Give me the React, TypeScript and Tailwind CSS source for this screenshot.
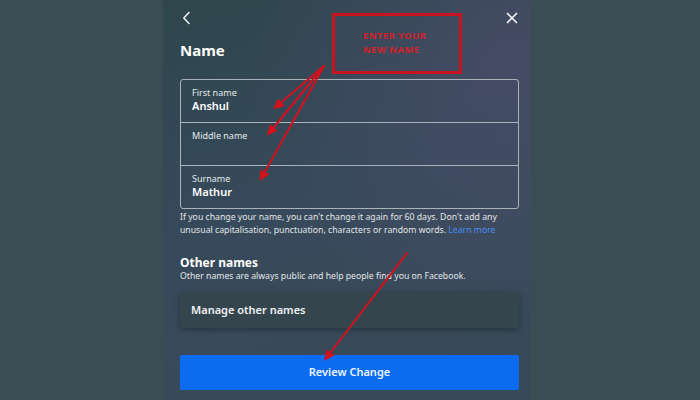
import React from "react";

const font = { fontFamily: '"Noto Sans", "Open Sans", Arial, sans-serif' };

function Field({ label, value }: { label: string; value?: string }) {
  return (
    <div className="h-[42px] px-[11px] pt-[7px] flex flex-col">
      <span className="text-[9px] leading-[12px] text-[#e4e8ea]">{label}</span>
      {value && <span className="text-[11px] leading-[13px] font-semibold text-white">{value}</span>}
    </div>
  );
}

export default function App() {
  return (
    <div className="relative w-[700px] h-[400px] overflow-hidden bg-[#3b4d54]" style={font}>
      <div className="ml-[163px] w-[367px] h-[400px] pl-[17px] pr-[11px] bg-[linear-gradient(165deg,#2e464c_0%,#36495a_45%,#394a5a_70%,#354956_100%)] relative">
        <div className="absolute inset-0 bg-[radial-gradient(circle_at_95%_15%,rgba(90,80,120,0.45),transparent_55%)] pointer-events-none" />
        <div className="relative">
          <div className="h-[36px] flex items-center justify-between pt-[0px]">
            <svg width="12" height="14" viewBox="0 0 12 14" className="ml-[1px]">
              <path d="M8 1.5 L2.8 7 L8 12.5" stroke="#e8ecee" strokeWidth="1.6" fill="none" strokeLinecap="round" strokeLinejoin="round" />
            </svg>
            <svg width="12" height="12" viewBox="0 0 12 12" className="mr-[1px]">
              <path d="M1.5 1.5 L10.5 10.5 M10.5 1.5 L1.5 10.5" stroke="#f0f2f4" strokeWidth="1.7" strokeLinecap="round" />
            </svg>
          </div>
          <div className="h-[43px] pt-[4px] text-[15px] leading-[20px] font-bold text-white">Name</div>
          <div className="border border-[#a9b3b8] rounded-[3px] flex flex-col">
            <Field label="First name" value="Anshul" />
            <div className="border-t border-[#a9b3b8]" />
            <Field label="Middle name" />
            <div className="border-t border-[#a9b3b8]" />
            <Field label="Surname" value="Mathur" />
          </div>
          <p className="mt-[2px] text-[8.7px] leading-[13px] text-[#e2e6e8]">
            If you change your name, you can't change it again for 60 days. Don't add any unusual capitalisation, punctuation, characters or random words.{" "}
            <span className="text-[#4b8cf0]">Learn more</span>
          </p>
          <div className="mt-[18px] text-[12px] leading-[15px] font-bold text-white">Other names</div>
          <div className="mt-[0px] text-[8.7px] leading-[13px] text-[#e2e6e8]">
            Other names are always public and help people find you on Facebook.
          </div>
          <div className="mt-[9px] h-[36px] rounded-[3px] bg-[#35454d] shadow-[0_2px_6px_rgba(0,0,0,0.3)] flex items-center px-[11px] text-[11px] font-semibold text-[#f0f2f4]">
            Manage other names
          </div>
          <div className="mt-[27px] h-[35px] rounded-[2px] bg-[#0b6cf2] flex items-center justify-center text-[11px] font-semibold text-[#eef4ff]">
            Review Change
          </div>
        </div>
      </div>

      {/* annotation box */}
      <div className="absolute left-[332px] top-[13px] w-[130px] h-[61px] border-[3px] border-[#c8141e] pl-[28px] pt-[13px] text-[9.5px] leading-[14px] font-bold tracking-[0.4px] text-[#d3202a]">
        <div>ENTER YOUR</div>
        <div>NEW NAME</div>
      </div>

      {/* arrows */}
      <svg className="absolute inset-0 pointer-events-none" width="700" height="400" viewBox="0 0 700 400">
        <defs>
          <marker id="ah" markerWidth="6" markerHeight="6" refX="3" refY="3" orient="auto" markerUnits="strokeWidth">
            <path d="M0 0.5 L5.5 3 L0 5.5 Z" fill="#d4101c" />
          </marker>
        </defs>
        <g stroke="#d4101c" strokeWidth="2" fill="none" strokeLinecap="round">
          <line x1="324" y1="66" x2="277" y2="106" markerEnd="url(#ah)" />
          <line x1="324" y1="66" x2="270" y2="132" markerEnd="url(#ah)" />
          <line x1="324" y1="66" x2="262" y2="177" markerEnd="url(#ah)" />
          <line x1="407" y1="253" x2="327" y2="357" markerEnd="url(#ah)" />
        </g>
      </svg>
    </div>
  );
}
